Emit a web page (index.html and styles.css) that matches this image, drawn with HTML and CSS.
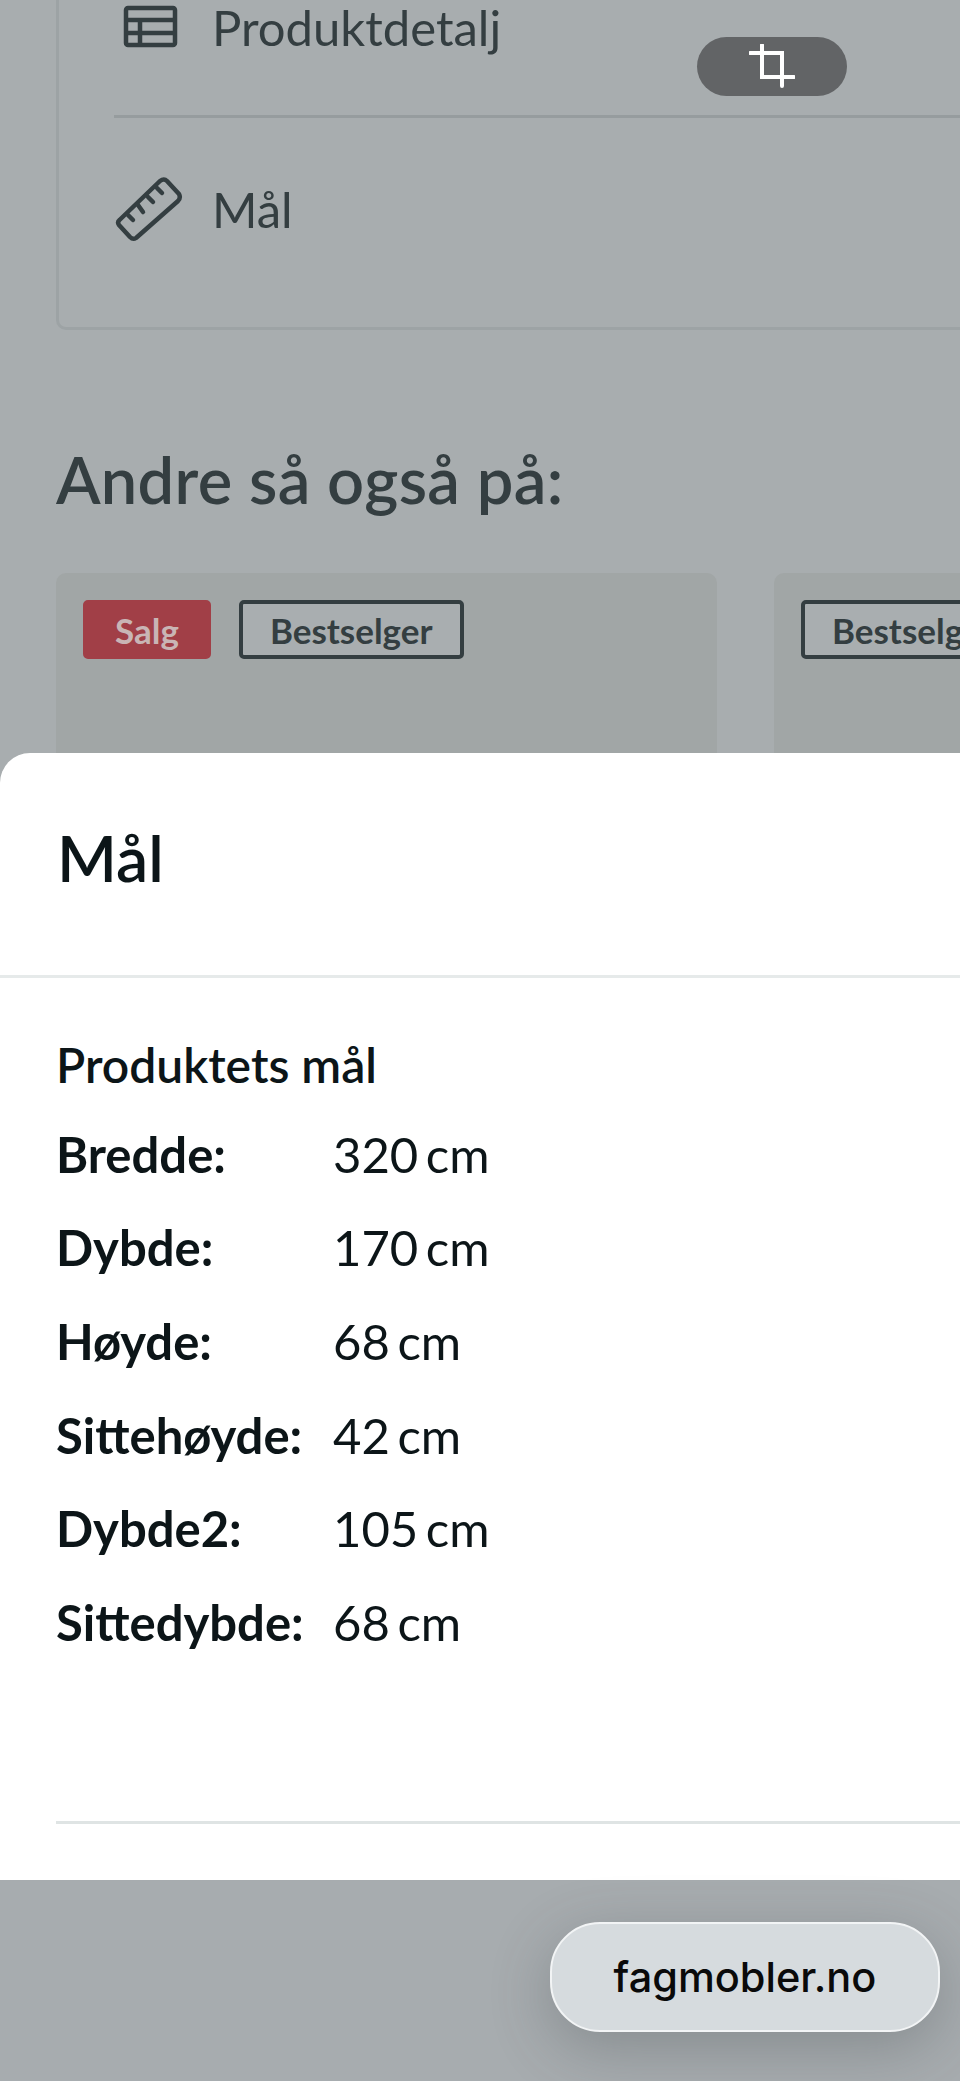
FILE: index.html
```html
<!DOCTYPE html>
<html lang="no">
<head>
    <meta charset="UTF-8">
    <meta name="viewport" content="width=device-width, initial-scale=1.0">
    <title>Mål</title>
    <link rel="stylesheet" href="styles.css">
</head>
<body>

    <div class="page">
        <div class="behind">
            <div class="panel">
                <div class="panel-row row-details">
                    <svg class="row-icon" width="64" height="50" viewBox="0 0 64 50" fill="none" stroke="#343e41" stroke-width="4.500" stroke-linejoin="round">
                        <rect x="12" y="8" width="49" height="37" rx="2"/>
                        <path d="M12 20H61M12 33H61M26 20V45"/>
                    </svg>
                    <span class="row-label">Produktdetalj</span>
                </div>
                <div class="panel-row row-size">
                    <svg class="row-icon" width="70" height="72" viewBox="0 0 70 72" fill="none" stroke="#343e41" stroke-width="4.500" stroke-linejoin="round" stroke-linecap="round">
                        <path d="M5.500 50L46 11Q50 8 53 11L65 24Q67 28 64 31L22 68Q19 70 16 67L5 55Q3 52 5.500 50Z"/>
                        <path d="M14 45L19 50M24 35L29 42M34 27L39 32M43 18L48 23"/>
                    </svg>
                    <span class="row-label label-size">Mål</span>
                </div>
            </div>

            <h2 class="also-title">Andre så også på:</h2>

            <div class="cards">
                <div class="card">
                    <span class="badge badge-sale">Salg</span>
                    <span class="badge">Bestselger</span>
                </div>
                <div class="card">
                    <span class="badge">Bestselger</span>
                </div>
            </div>

            <div class="crop-pill">
                <svg width="46" height="46" viewBox="0 0 46 46" fill="none" stroke="#fff" stroke-width="4" stroke-linecap="round">
                    <path d="M1 9H33V42M13 1V33H45"/>
                </svg>
            </div>
        </div>

        <div class="sheet">
            <h1 class="sheet-title">Mål</h1>
            <div class="sheet-body">
                <h3 class="size-title">Produktets mål</h3>
                <div class="size-row"><b>Bredde:</b><span>320 cm</span></div>
                <div class="size-row"><b>Dybde:</b><span>170 cm</span></div>
                <div class="size-row"><b>Høyde:</b><span>68 cm</span></div>
                <div class="size-row"><b>Sittehøyde:</b><span>42 cm</span></div>
                <div class="size-row"><b>Dybde2:</b><span>105 cm</span></div>
                <div class="size-row"><b>Sittedybde:</b><span>68 cm</span></div>
                <div class="sheet-line"></div>
            </div>
        </div>

        <div class="browser-bar">
            <div class="url-pill">fagmobler.no</div>
        </div>
    </div>

</body>
</html>
```

FILE: styles.css
```css
body {
    font-family: Lato, "Liberation Sans", sans-serif;
    margin: 0;
    background-color: #a8adaf;
}
.page {
    width: 960px;
    height: 2081px;
    overflow: hidden;
    display: flex;
    flex-direction: column;
}

/* dimmed page behind the sheet */
.behind {
    position: relative;
    height: 753px;
    flex-shrink: 0;
    overflow: hidden;
    color: #343e41;
}
.panel {
    width: 1000px;
    height: 330px;
    box-sizing: border-box;
    margin-left: 56px;
    padding-left: 55px;
    border-left: 3px solid #9da3a5;
    border-bottom: 3px solid #9da3a5;
    border-bottom-left-radius: 10px;
}
.panel-row {
    display: flex;
    align-items: flex-start;
    font-size: 49px;
    line-height: 50px;
}
.row-details {
    height: 118px;
    box-sizing: border-box;
    border-bottom: 3px solid #969c9e;
    gap: 34px;
}
.row-size {
    padding-top: 52px;
    gap: 28px;
}
.row-icon {
    flex-shrink: 0;
}
.row-details .row-label {
    margin-top: 2px;
}
.row-label {
    white-space: nowrap;
}
.row-label.label-size {
    margin-top: 14px;
}
.also-title {
    margin: 0;
    padding: 113px 0 0 56px;
    font-size: 65px;
    font-weight: 600;
    letter-spacing: 0.300px;
    line-height: 72px;
}
.cards {
    display: flex;
    gap: 57px;
    margin: 58px 0 0 56px;
}
.card {
    width: 661px;
    height: 300px;
    flex-shrink: 0;
    box-sizing: border-box;
    padding: 27px;
    display: flex;
    align-items: flex-start;
    gap: 28px;
    background-color: #a1a6a6;
    border-radius: 10px;
}
.badge {
    height: 59px;
    box-sizing: border-box;
    padding: 0 27px;
    display: flex;
    align-items: center;
    border: 4px solid #343e41;
    border-radius: 5px;
    background-color: #a9aeb0;
    font-size: 35px;
    font-weight: 700;
}
.badge-sale {
    border-color: #a13f47;
    background-color: #a13f47;
    color: #c9b5b5;
    padding: 0 28px;
}
.crop-pill {
    position: absolute;
    left: 697px;
    top: 37px;
    width: 150px;
    height: 59px;
    border-radius: 30px;
    background-color: #626466;
    display: flex;
    align-items: center;
    justify-content: center;
}

/* sheet */
.sheet {
    height: 1127px;
    flex-shrink: 0;
    background-color: #fff;
    border-radius: 30px 0 0 0;
    color: #0c1518;
}
.sheet-title {
    margin: 0;
    height: 225px;
    box-sizing: border-box;
    padding: 67px 0 0 57px;
    font-size: 64px;
    font-weight: 600;
    line-height: 76px;
    border-bottom: 3px solid #e6eaea;
}
.sheet-body {
    padding: 59px 0 0 56px;
}
.size-title {
    margin: 0 0 14px;
    font-size: 48px;
    font-weight: 600;
    line-height: 56px;
}
.size-row {
    display: flex;
    height: 93.600px;
    align-items: center;
    font-size: 49px;
    word-spacing: -5px;
}
.size-row b {
    width: 277px;
    flex-shrink: 0;
}
.sheet-line {
    margin-top: 152px;
    height: 3px;
    background-color: #dfe4e4;
}

/* browser url bar */
.browser-bar {
    flex: 1;
    display: flex;
    justify-content: flex-end;
    padding: 42px 20px 0 0;
    background-color: #a7acaf;
}
.url-pill {
    width: 390px;
    height: 110px;
    box-sizing: border-box;
    display: flex;
    align-items: center;
    justify-content: center;
    border: 2px solid #f2f4f5;
    border-radius: 50px;
    background-color: #d6dbde;
    box-shadow: 0 16px 60px rgba(60, 65, 70, 0.3);
    font-family: Inter, sans-serif;
    font-size: 41.500px;
    font-weight: 500;
    color: #0a0a0a;
}
```
